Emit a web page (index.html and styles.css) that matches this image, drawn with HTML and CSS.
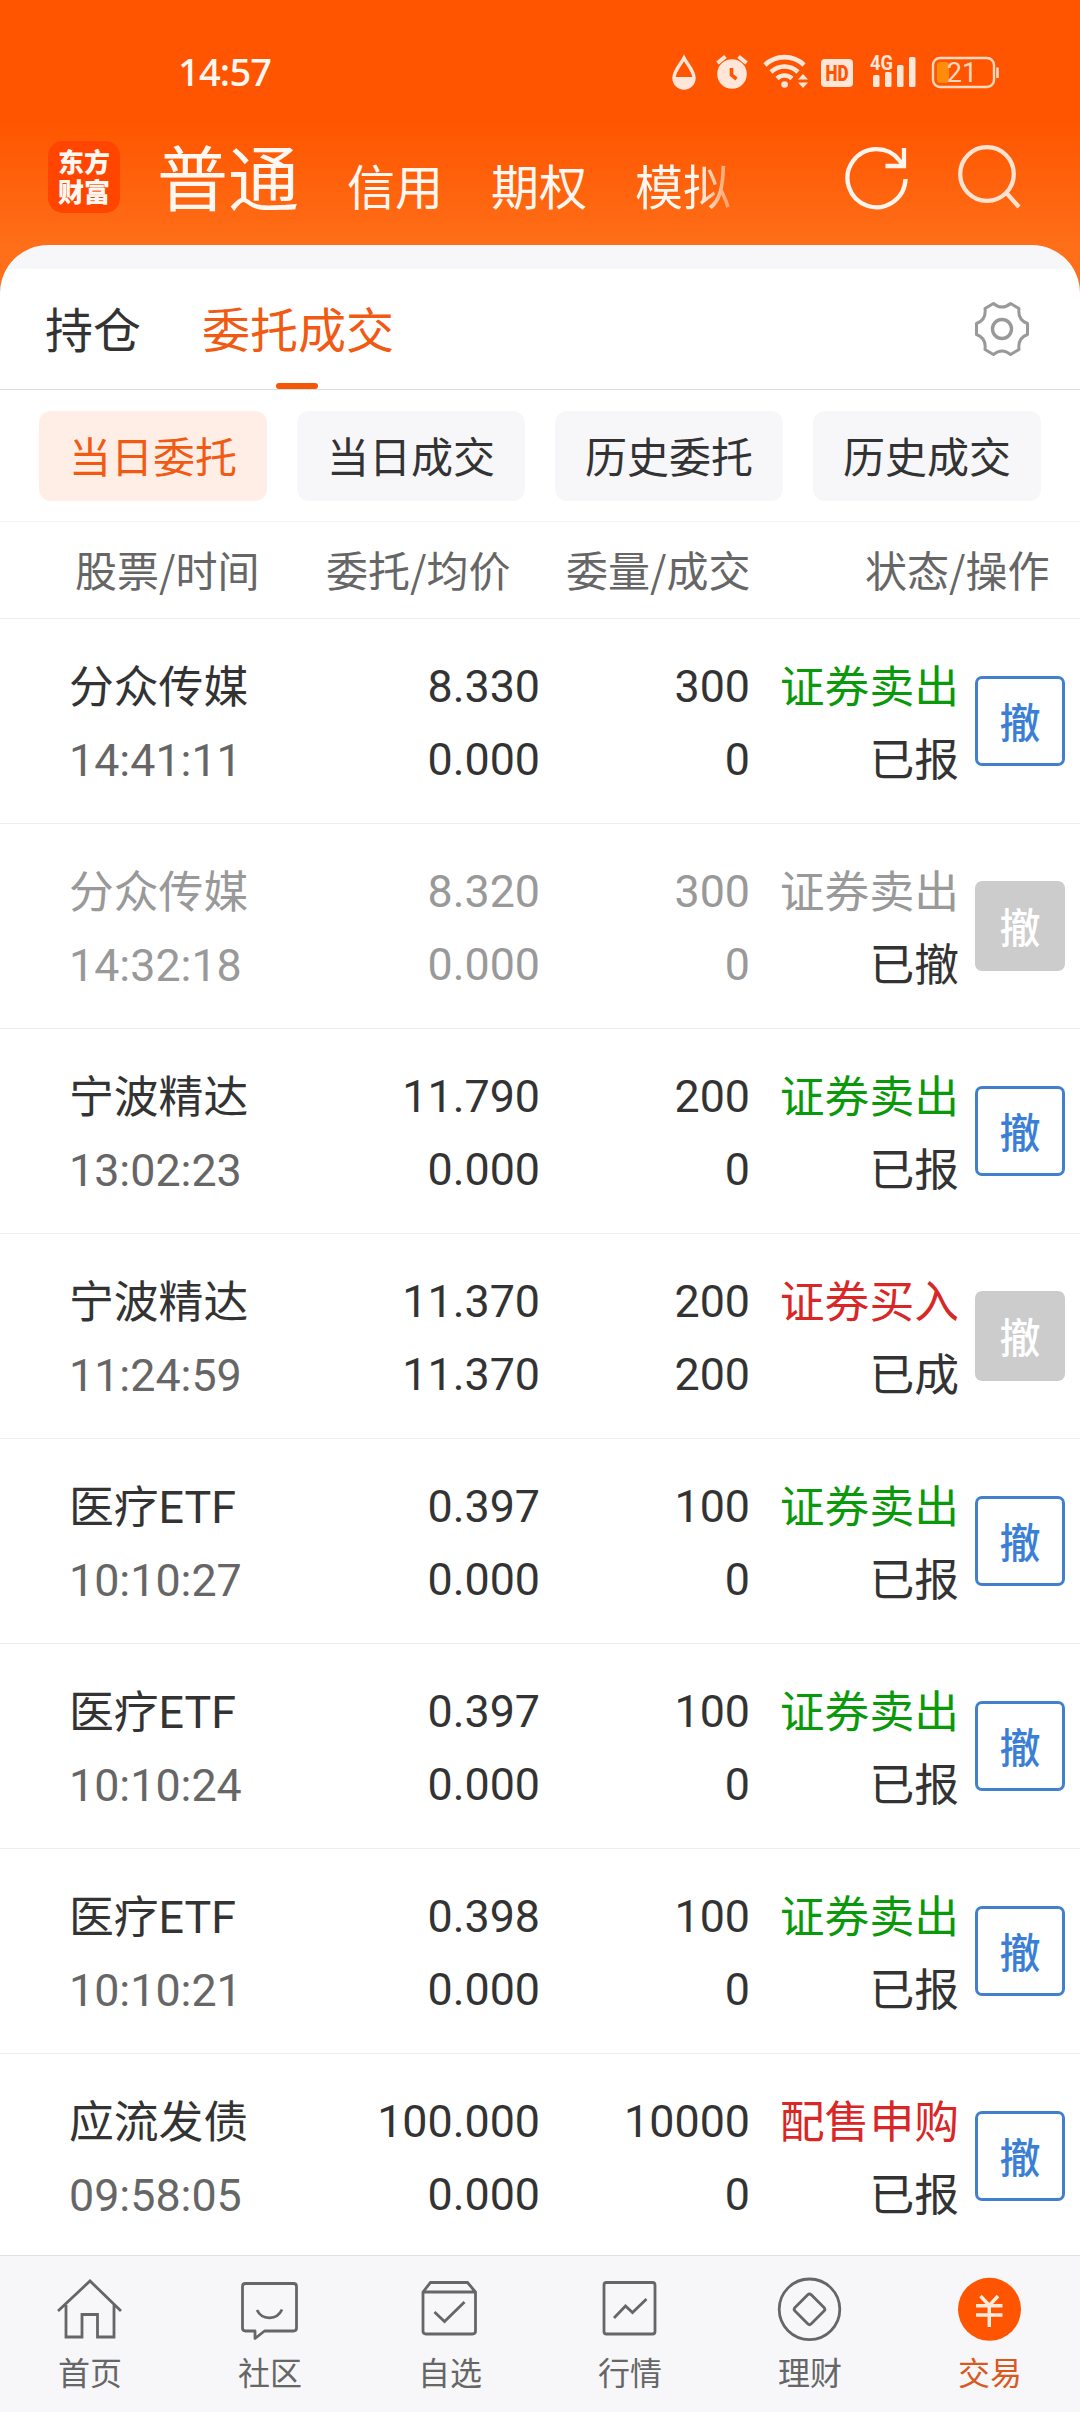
FILE: index.html
```html
<!DOCTYPE html>
<html lang="zh-CN">
    <head>
        <title>委托成交</title>
        <meta charset="UTF-8">
        <link rel="stylesheet" href="styles.css">
    </head>
    <body>
        <div class="top">
            <div class="status">
                <span class="clock">14:57</span>
                <svg class="status_icons" width="340" height="50" viewBox="665 46 340 50">
                    <!-- drop -->
                    <path d="M684 58 C681 64 674 71 674 78 a10 10 0 0 0 20 0 C694 71 687 64 684 58z" fill="none" stroke="#ffe6d9" stroke-width="3.4"/>
                    <path d="M673 77 h22 a11 11 0 0 1 -22 0z" fill="#ffe6d9"/>
                    <!-- alarm -->
                    <circle cx="732" cy="74" r="14.8" fill="#ffe6d9"/>
                    <path d="M717.500 63 l8 -6.500 M746.500 63 l-8 -6.500" stroke="#ffe6d9" stroke-width="4"/>
                    <path d="M731.500 68 v7 l5 4" fill="none" stroke="#ff5500" stroke-width="3.600"/>
                    <!-- wifi -->
                    <g fill="none" stroke="#ffe6d9" stroke-width="4.600">
                        <path d="M765 65 a28 28 0 0 1 39 0"/>
                        <path d="M771 72 a19.500 19.500 0 0 1 27 0"/>
                        <path d="M777 78.500 a11 11 0 0 1 15 0"/>
                    </g>
                    <circle cx="784.600" cy="84.500" r="3.300" fill="#ffe6d9"/>
                    <path d="M798 79.500 l5 -5.500 l5 5.500z M798 82.500 l5 5.500 l5 -5.500z" fill="#ffe6d9"/>
                    <rect x="821" y="59" width="32" height="28" rx="4" fill="#ffe6d9"/>
                    <text x="837" y="81" class="hd" textLength="23" lengthAdjust="spacingAndGlyphs">HD</text>
                    <text x="870" y="70" class="net" textLength="23" lengthAdjust="spacingAndGlyphs">4G</text>
                    <g fill="#ffe6d9">
                        <rect x="873" y="75" width="6.500" height="12" rx="1.500"/>
                        <rect x="885" y="72" width="6.500" height="15" rx="1.500"/>
                        <rect x="897" y="65" width="6.500" height="22" rx="1.500"/>
                        <rect x="909" y="57" width="6.500" height="30" rx="1.500"/>
                    </g>
                    <rect x="933" y="58" width="61" height="29" rx="7" fill="none" stroke="#ffd9bf" stroke-width="2.400"/>
                    <rect x="937" y="62" width="12" height="21" rx="3" fill="#ff8c0a"/>
                    <path d="M997.500 67.500 v10.500" stroke="#ffd9bf" stroke-width="2.600"/>
                    <text x="962" y="82" class="level">21</text>
                </svg>
            </div>
            <div class="nav">
                <div class="logo">东方<br>财富</div>
                <div class="accounts">
                    <span class="current">普通</span>
                    <span>信用</span>
                    <span>期权</span>
                    <span class="fade">模拟</span>
                </div>
                <svg class="refresh" width="66" height="66" viewBox="0 0 66 66" fill="none" stroke="#fff5ee" stroke-width="4.300">
                    <path d="M62.500 34 A29 29 0 1 1 56.500 15.500 L61 21"/>
                    <path d="M61 3 v18 h-18.500"/>
                </svg>
                <svg class="search" width="66" height="66" viewBox="0 0 66 66" fill="none" stroke="#ffe3d2" stroke-width="4.300">
                    <circle cx="31" cy="29" r="26.800"/>
                    <path d="M50 47.500 L63 62"/>
                </svg>
            </div>
        </div>

        <div class="card">
            <div class="tabs">
                <span class="tab">持仓</span>
                <span class="tab active">委托成交</span>
                <svg class="gear" width="60" height="60" viewBox="-30 -30 60 60" fill="none" stroke="#999" stroke-width="3">
                    <path stroke-linejoin="round" d="M-8.600 -25.500 Q0 -18.500 8.600 -25.500 L17 -20.500 Q15.500 -9 25.500 -5.500 V5.500 Q15.500 9 17 20.500 L8.600 25.500 Q0 18.500 -8.600 25.500 L-17 20.500 Q-15.500 9 -25.500 5.500 V-5.500 Q-15.500 -9 -17 -20.500z"/>
                    <circle r="9.500" stroke-width="3.400"/>
                </svg>
            </div>
            <div class="chips">
                <span class="chip active">当日委托</span>
                <span class="chip">当日成交</span>
                <span class="chip">历史委托</span>
                <span class="chip">历史成交</span>
            </div>
            <div class="heads">
                <span>股票/时间</span>
                <span>委托/均价</span>
                <span>委量/成交</span>
                <span>状态/操作</span>
            </div>

            <div class="order">
                <div class="name">分众传媒<small>14:41:11</small></div>
                <div>8.330<br>0.000</div>
                <div>300<br>0</div>
                <div class="side"><span class="sell">证券卖出</span><br>已报</div>
                <button>撤</button>
            </div>
            <div class="order gone">
                <div class="name">分众传媒<small>14:32:18</small></div>
                <div>8.320<br>0.000</div>
                <div>300<br>0</div>
                <div class="side">证券卖出<br><span class="state">已撤</span></div>
                <button disabled>撤</button>
            </div>
            <div class="order">
                <div class="name">宁波精达<small>13:02:23</small></div>
                <div>11.790<br>0.000</div>
                <div>200<br>0</div>
                <div class="side"><span class="sell">证券卖出</span><br>已报</div>
                <button>撤</button>
            </div>
            <div class="order">
                <div class="name">宁波精达<small>11:24:59</small></div>
                <div>11.370<br>11.370</div>
                <div>200<br>200</div>
                <div class="side"><span class="buy">证券买入</span><br>已成</div>
                <button disabled>撤</button>
            </div>
            <div class="order">
                <div class="name">医疗ETF<small>10:10:27</small></div>
                <div>0.397<br>0.000</div>
                <div>100<br>0</div>
                <div class="side"><span class="sell">证券卖出</span><br>已报</div>
                <button>撤</button>
            </div>
            <div class="order">
                <div class="name">医疗ETF<small>10:10:24</small></div>
                <div>0.397<br>0.000</div>
                <div>100<br>0</div>
                <div class="side"><span class="sell">证券卖出</span><br>已报</div>
                <button>撤</button>
            </div>
            <div class="order">
                <div class="name">医疗ETF<small>10:10:21</small></div>
                <div>0.398<br>0.000</div>
                <div>100<br>0</div>
                <div class="side"><span class="sell">证券卖出</span><br>已报</div>
                <button>撤</button>
            </div>
            <div class="order">
                <div class="name">应流发债<small>09:58:05</small></div>
                <div>100.000<br>0.000</div>
                <div>10000<br>0</div>
                <div class="side"><span class="buy">配售申购</span><br>已报</div>
                <button>撤</button>
            </div>
        </div>

        <div class="bottom">
            <div class="item">
                <svg width="70" height="70" viewBox="55 2274 70 70">
                    <path d="M58 2311 L90 2281 L121 2311 M66 2305 V2337 H82 V2314.500 H97.500 V2337 H114 V2305"/>
                </svg>
                <span>首页</span>
            </div>
            <div class="item">
                <svg width="70" height="70" viewBox="235 2274 70 70">
                    <path stroke-linejoin="round" d="M245.500 2283.500 H293.500 q3 0 3 3 V2328 q0 3 -3 3 H264.500 L255 2338.500 V2331 H245.500 q-3 0 -3 -3 V2286.500 q0 -3 3 -3z"/>
                    <path d="M257 2310 C262 2320.500 277 2320.500 282 2309.500"/>
                </svg>
                <span>社区</span>
            </div>
            <div class="item">
                <svg width="70" height="70" viewBox="415 2274 70 70">
                    <path d="M423 2292 L430.500 2282.500 H467.500 L475.500 2292 V2331 q0 3 -3 3 H426 q-3 0 -3 -3z M423 2292 H475.500 M434.500 2312 L444.500 2321.500 L464.500 2302"/>
                </svg>
                <span>自选</span>
            </div>
            <div class="item">
                <svg width="70" height="70" viewBox="595 2274 70 70">
                    <rect x="604" y="2282.500" width="51" height="51.500" rx="2.500"/>
                    <path d="M614 2318 L625.500 2306 L632.500 2312.500 L646.500 2299"/>
                </svg>
                <span>行情</span>
            </div>
            <div class="item">
                <svg width="70" height="70" viewBox="775 2274 70 70">
                    <circle cx="809.500" cy="2309.300" r="30.300"/>
                    <rect x="-11.500" y="-11.500" width="23" height="23" rx="2.500" transform="translate(809.500 2309.300) rotate(45)"/>
                </svg>
                <span>理财</span>
            </div>
            <div class="item active">
                <svg width="70" height="70" viewBox="955 2274 70 70">
                    <circle class="disc" cx="989.500" cy="2309.300" r="31.500"/>
                    <path class="yen" d="M980.500 2296 L989.300 2305.500 L998 2296 M976 2305.800 H1002.500 M976 2315 H1002.500 M989.300 2305 V2327"/>
                </svg>
                <span>交易</span>
            </div>
        </div>
    </body>
</html>
```
FILE: styles.css
```css
* {
    box-sizing: border-box;
}
body {
    margin: 0;
    width: 1080px;
    height: 2412px;
    overflow: hidden;
    display: flex;
    flex-direction: column;
    font-family: Roboto, "Noto Sans CJK SC", sans-serif;
    color: #333;
    background-color: white;
}
.top {
    height: 293px;
    background: linear-gradient(#ff5500 120px, #ff6e18 245px);
    color: #fff8f2;
    flex-shrink: 0;
}
.status {
    height: 96px;
    padding: 46px 75px 0 178px;
    display: flex;
    justify-content: space-between;
}
.clock {
    font: 500 38px/51px "Noto Sans", sans-serif;
    letter-spacing: -0.8px;
}
.hd {
    font: 900 22px Roboto, sans-serif;
    text-anchor: middle;
    fill: #ff5500;
}
.net {
    font: bold 21px Roboto, sans-serif;
    fill: #ffe6d9;
}
.level {
    font: 27px Roboto, sans-serif;
    text-anchor: middle;
    fill: #ffd9bf;
}
.nav {
    display: flex;
    align-items: flex-start;
    padding-left: 48px;
}
.logo {
    width: 72px;
    height: 72px;
    margin-top: 45px;
    padding-top: 5px;
    border-radius: 15px;
    background-color: #ff4500;
    font: 900 26px/30px "Noto Sans CJK SC", sans-serif;
    text-align: center;
}
.accounts {
    display: flex;
    align-items: baseline;
    gap: 48px;
    width: 650px;
    margin-left: 37px;
    padding-top: 28px;
    font: 48px/100px "Noto Sans CJK SC", sans-serif;
}
.accounts .current {
    font-size: 71px;
}
.fade {
    color: transparent;
    background: linear-gradient(to right, #fff8f2 65%, #ff9a5c);
    background-clip: text;
    -webkit-background-clip: text;
}
.refresh {
    margin: 49px 0 0 36px;
}
.search {
    margin: 49px 0 0 47px;
}
.card {
    margin-top: -48px;
    border-radius: 48px 48px 0 0;
    background: linear-gradient(#f7f7fa 24px, white 24px);
    flex: 1;
    overflow: hidden;
}
.tabs {
    height: 145px;
    padding: 24px 48px 0 45px;
    border-bottom: 1px solid #ddd;
    display: flex;
    gap: 61px;
    font: 48px/117px "Noto Sans CJK SC", sans-serif;
}
.tab.active {
    color: #f15a12;
    position: relative;
}
.tab.active::after {
    content: "";
    position: absolute;
    left: 74px;
    bottom: 0;
    width: 42px;
    height: 6px;
    border-radius: 3px;
    background-color: #f55708;
}
.gear {
    margin: 30px 0 0 auto;
}
.chips {
    display: flex;
    gap: 30px;
    height: 132px;
    padding: 21px 39px;
    border-bottom: 1px solid #f5f5f5;
}
.chip {
    width: 228px;
    height: 90px;
    border-radius: 12px;
    background-color: #f7f7fa;
    font: 42px/88px "Noto Sans CJK SC", sans-serif;
    text-align: center;
}
.chip.active {
    background-color: #ffeee5;
    color: #f15a12;
}
.heads {
    display: grid;
    grid-template-columns: 251px 240px 299px auto;
    height: 97px;
    padding-left: 75px;
    border-bottom: 1px solid #eee;
    font: 42px/94px "Noto Sans CJK SC", sans-serif;
    color: #666;
}
.order {
    display: grid;
    grid-template-columns: 231px 240px 210px 209px 105px;
    height: 205px;
    padding: 31px 15px 0 69px;
    border-bottom: 1px solid #eee;
    font-size: 44.800px;
    line-height: 73px;
    text-align: right;
}
.name {
    text-align: left;
    padding-top: 1px;
}
.name small {
    display: block;
    font-size: 44.800px;
    color: #666;
}
.side {
    padding-top: 1px;
}
.gone, .gone small {
    color: #999;
}
.state {
    color: #333;
}
.sell {
    color: #0a990a;
}
.buy {
    color: #d92626;
}
.order button {
    width: 90px;
    height: 90px;
    margin: 26px 0 0 16px;
    padding: 0 0 2px;
    border: 3px solid #4080cc;
    border-radius: 7px;
    background-color: white;
    color: #3a7fd5;
    font: 500 41px/82px "Noto Sans CJK SC", sans-serif;
}
.order button:disabled {
    border-color: #ccc;
    background-color: #ccc;
    color: white;
}
.bottom {
    display: flex;
    flex-shrink: 0;
    height: 157px;
    border-top: 1px solid #e2e2e4;
    background-color: #f7f7fa;
}
.item {
    width: 180px;
    padding-top: 18px;
    display: flex;
    flex-direction: column;
    align-items: center;
    font: 32px/54px "Noto Sans CJK SC", sans-serif;
    color: #666;
}
.item svg {
    fill: none;
    stroke: #666;
    stroke-width: 2.8;
}
.item.active {
    color: #d95a1e;
}
.item .disc {
    fill: #ff5500;
    stroke: none;
}
.item .yen {
    stroke: #ffeadb;
    stroke-width: 3.4;
}
```
